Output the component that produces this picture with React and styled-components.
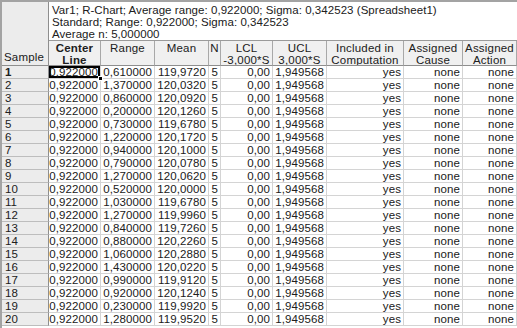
import React from "react";
import styled, { createGlobalStyle } from "styled-components";

const GlobalStyle = createGlobalStyle`
  html, body {
    margin: 0;
    padding: 0;
    background: #ffffff;
  }
  body {
    font-family: "Liberation Sans", Arial, sans-serif;
  }
`;

const Sheet = styled.div`
  display: grid;
  grid-template-columns: 47px 52px 54px 54px 12px 52px 54px 77px 59px 54px;
  grid-template-rows: 39px 25px repeat(20, 13px);
  width: 517px;
  height: 328px;
  overflow: hidden;
  box-sizing: border-box;
  border-top: 2px solid #a3a3a3;
  border-left: 2px solid #a3a3a3;
  font-size: 11.5px;
  color: #202020;
`;

const Corner = styled.div`
  grid-row: 1 / 3;
  box-sizing: border-box;
  background: #ececec;
  border-right: 1px solid #8e8e8e;
  border-bottom: 1px solid #8e8e8e;
  display: flex;
  align-items: flex-end;
  padding: 0 0 1px 2px;
  line-height: 13px;
  letter-spacing: 0.2px;
`;

const Title = styled.div`
  grid-column: 2 / -1;
  box-sizing: border-box;
  border-bottom: 1px solid #9a9a9a;
  padding: 2px 0 0 3px;
  line-height: 12.2px;
  white-space: nowrap;
  letter-spacing: 0.05px;
  overflow: hidden;
`;

const HeadCell = styled.div`
  box-sizing: border-box;
  background: #f0f0f0;
  border-right: 1px solid #a8a8a8;
  border-bottom: 1px solid #8e8e8e;
  text-align: center;
  line-height: 12px;
  padding-top: 1px;
  letter-spacing: 0.2px;
  font-weight: ${(p) => (p.$active ? "bold" : "normal")};
  white-space: nowrap;
  overflow: hidden;
`;

const RowHead = styled.div`
  box-sizing: border-box;
  background: #ececec;
  border-right: 1px solid #8e8e8e;
  border-bottom: 1px solid #bdbdbd;
  padding-left: 3px;
  line-height: 12px;
  font-weight: ${(p) => (p.$active ? "bold" : "normal")};
`;

const Cell = styled.div`
  position: relative;
  box-sizing: border-box;
  border-right: 1px solid #d4d4d4;
  border-bottom: 1px solid #d4d4d4;
  text-align: right;
  padding-right: 2px;
  line-height: 12px;
  letter-spacing: 0.1px;
  white-space: nowrap;
  overflow: ${(p) => (p.$selected ? "visible" : "hidden")};
  ${(p) =>
    p.$selected &&
    `
    box-shadow: inset 0 0 0 2px #000;
    z-index: 1;
  `}
`;

const Handle = styled.span`
  position: absolute;
  right: -3px;
  bottom: -3px;
  width: 5px;
  height: 5px;
  background: #000;
  border: 1px solid #fff;
  box-sizing: border-box;
`;

const columns = [
  { label: ["Center", "Line"], active: true },
  { label: ["Range"] },
  { label: ["Mean"] },
  { label: ["N"] },
  { label: ["LCL", "-3,000*S"] },
  { label: ["UCL", "3,000*S"] },
  { label: ["Included in", "Computation"] },
  { label: ["Assigned", "Cause"] },
  { label: ["Assigned", "Action"] },
];

const ranges = [
  "0,610000", "1,370000", "0,860000", "0,200000", "0,730000",
  "1,220000", "0,940000", "0,790000", "1,270000", "0,520000",
  "1,030000", "1,270000", "0,840000", "0,880000", "1,060000",
  "1,430000", "0,990000", "0,920000", "0,230000", "1,280000",
];

const means = [
  "119,9720", "120,0320", "120,0920", "120,1260", "119,6780",
  "120,1720", "120,1000", "120,0780", "120,0620", "120,0000",
  "119,6780", "119,9960", "119,7260", "120,2260", "120,2880",
  "120,0220", "119,9120", "120,1240", "119,9920", "119,9520",
];

const rows = ranges.map((range, i) => [
  "0,922000",
  range,
  means[i],
  "5",
  "0,00",
  "1,949568",
  "yes",
  "none",
  "none",
]);

export default function App() {
  return (
    <>
      <GlobalStyle />
      <Sheet>
        <Corner>Sample</Corner>
        <Title>
          Var1; R-Chart; Average range: 0,922000; Sigma: 0,342523 (Spreadsheet1)
          <br />
          Standard; Range: 0,922000; Sigma: 0,342523
          <br />
          Average n: 5,000000
        </Title>
        {columns.map((col, i) => (
          <HeadCell key={i} $active={col.active}>
            {col.label.map((line, j) => (
              <div key={j}>{line}</div>
            ))}
          </HeadCell>
        ))}
        {rows.map((row, r) => (
          <React.Fragment key={r}>
            <RowHead $active={r === 0}>{r + 1}</RowHead>
            {row.map((value, c) => {
              const selected = r === 0 && c === 0;
              return (
                <Cell key={c} $selected={selected}>
                  {value}
                  {selected && <Handle />}
                </Cell>
              );
            })}
          </React.Fragment>
        ))}
      </Sheet>
    </>
  );
}
